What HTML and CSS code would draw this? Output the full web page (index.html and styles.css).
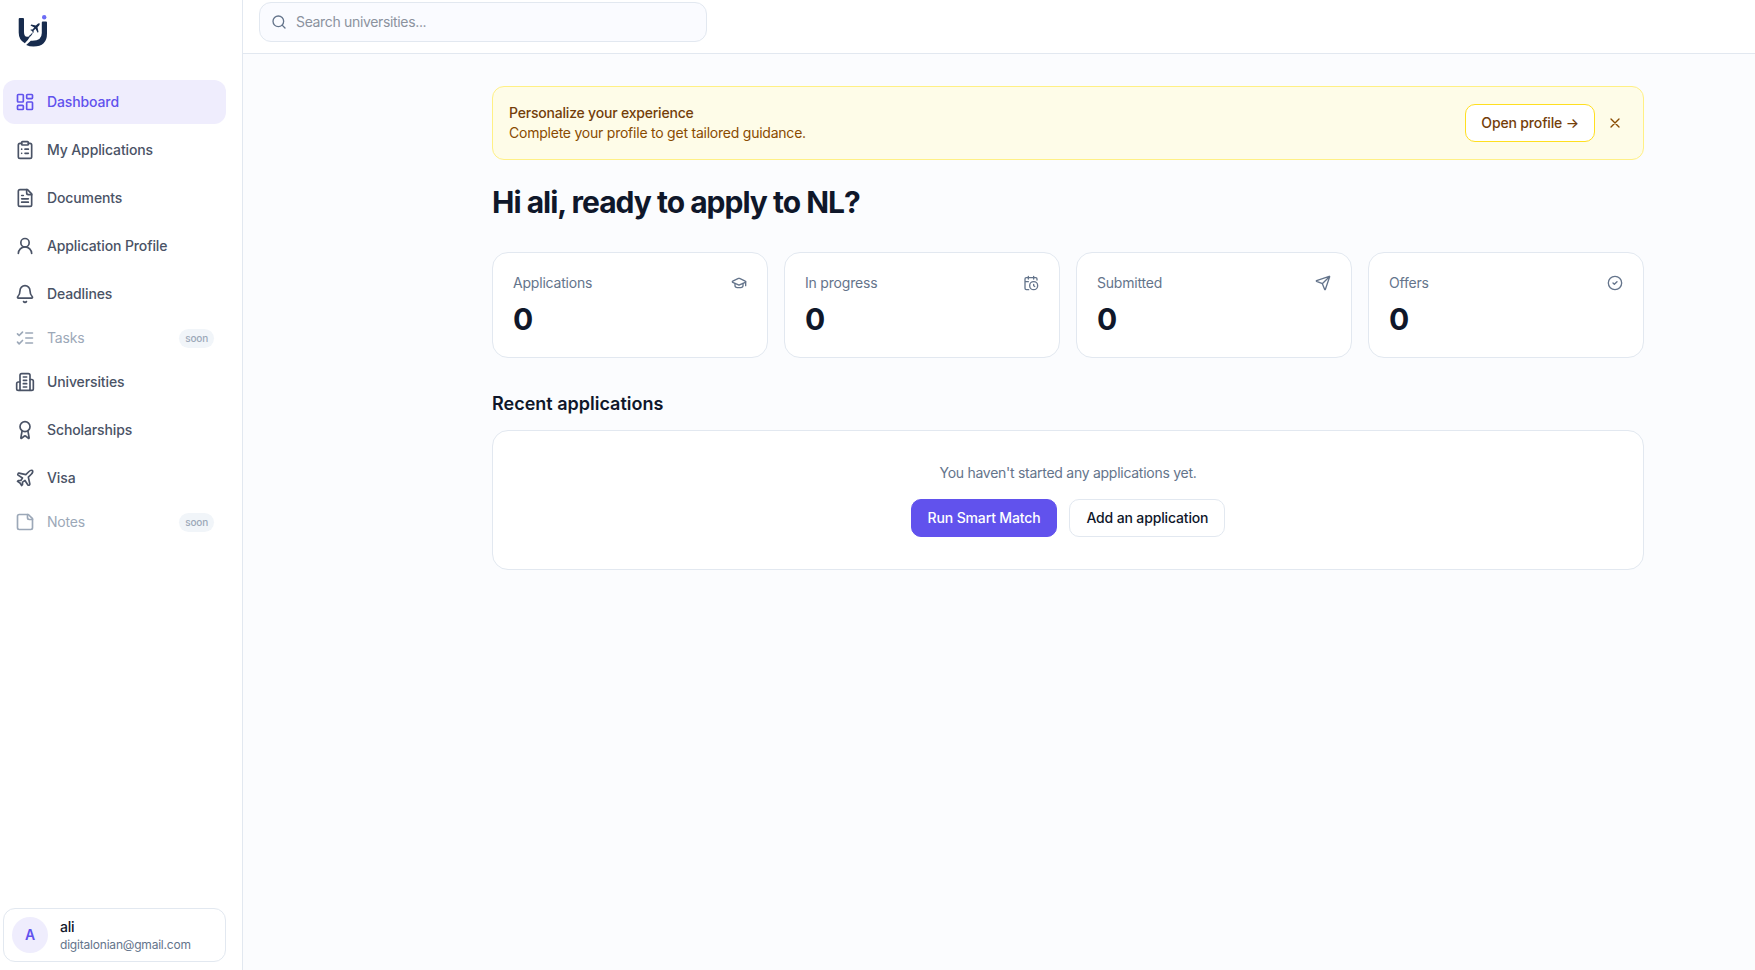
FILE: index.html
```
<!DOCTYPE html>
<html lang="en">
<head>
    <meta charset="UTF-8">
    <meta name="viewport" content="width=device-width, initial-scale=1.0">
    <title>Dashboard</title>
    <link rel="stylesheet" href="styles.css">
</head>
<body>
    <aside class="sidebar">
        <a class="logo" href="#">
            <svg width="32" height="34" viewBox="0 0 32 34">
                <g fill="#172b4d">
                    <path d="M1.700 5Q1.700 4 2.700 4H6Q7 4 7 5V18Q7 22.500 10 22.800L13 22.500Q11 26.500 7.800 29.200Q1.700 26 1.700 18.500z"/>
                    <path d="M24.800 8.500Q24.800 7.500 25.800 7.500H29Q30 7.500 30 8.500V19.500Q30 32.500 16.500 32.500Q12.500 32.500 9.200 31L13.800 26.800Q24.800 27.500 24.800 19z"/>
                    <path d="M22.600 9.300q-1.200-.3-2.100.7l-1.600 1.600-4.600-1-.8.8 3.800 2.200-1.800 2-1.500-.2-.7.700 1.800.9.900 1.900.7-.7-.2-1.500 2-1.900 2.200 3.900.8-.8-1-4.700 1.600-1.600q.9-1 .5-2.300z"/>
                    <path d="M15.300 18.500q1 1.200-2.500 4.500l-1.200-.8q3-1.800 3.700-3.700z"/>
                </g>
                <circle cx="27.200" cy="3.300" r="2.200" fill="#6c6cf5"/>
            </svg>
        </a>

        <nav class="nav">
            <a class="nav-item active" href="#">
                <svg class="icon" viewBox="0 0 24 24"><rect x="3" y="3" width="7" height="9" rx="1"/><rect x="14" y="3" width="7" height="5" rx="1"/><rect x="14" y="12" width="7" height="9" rx="1"/><rect x="3" y="16" width="7" height="5" rx="1"/></svg>
                <span>Dashboard</span>
            </a>
            <a class="nav-item" href="#">
                <svg class="icon" viewBox="0 0 24 24"><rect x="8" y="2" width="8" height="4" rx="1"/><path d="M16 4h2a2 2 0 0 1 2 2v14a2 2 0 0 1-2 2H6a2 2 0 0 1-2-2V6a2 2 0 0 1 2-2h2M12 11h4M12 16h4M8 11h.01M8 16h.01"/></svg>
                <span>My Applications</span>
            </a>
            <a class="nav-item" href="#">
                <svg class="icon" viewBox="0 0 24 24"><path d="M15 2H6a2 2 0 0 0-2 2v16a2 2 0 0 0 2 2h12a2 2 0 0 0 2-2V7Z"/><path d="M14 2v4a2 2 0 0 0 2 2h4M10 9H8M16 13H8M16 17H8"/></svg>
                <span>Documents</span>
            </a>
            <a class="nav-item" href="#">
                <svg class="icon" viewBox="0 0 24 24"><circle cx="12" cy="8" r="5"/><path d="M20 21a8 8 0 0 0-16 0"/></svg>
                <span>Application Profile</span>
            </a>
            <a class="nav-item" href="#">
                <svg class="icon" viewBox="0 0 24 24"><path d="M10.268 21a2 2 0 0 0 3.464 0"/><path d="M3.262 15.326A1 1 0 0 0 4 17h16a1 1 0 0 0 .74-1.673C19.410 13.956 18 12.499 18 8A6 6 0 0 0 6 8c0 4.499-1.411 5.956-2.738 7.326"/></svg>
                <span>Deadlines</span>
            </a>
            <div class="nav-item disabled">
                <svg class="icon" viewBox="0 0 24 24"><path d="m3 17 2 2 4-4M3 7l2 2 4-4M13 6h8M13 12h8M13 18h8"/></svg>
                <span>Tasks</span>
                <span class="badge">soon</span>
            </div>
            <a class="nav-item" href="#">
                <svg class="icon" viewBox="0 0 24 24"><path d="M6 22V4a2 2 0 0 1 2-2h8a2 2 0 0 1 2 2v18Z"/><path d="M6 12H4a2 2 0 0 0-2 2v6a2 2 0 0 0 2 2h2M18 9h2a2 2 0 0 1 2 2v9a2 2 0 0 1-2 2h-2M10 6h4M10 10h4M10 14h4M10 18h4"/></svg>
                <span>Universities</span>
            </a>
            <a class="nav-item" href="#">
                <svg class="icon" viewBox="0 0 24 24"><path d="m15.477 12.890 1.515 8.526a.5.5 0 0 1-.81.47l-3.580-2.687a1 1 0 0 0-1.197 0l-3.586 2.686a.5.5 0 0 1-.81-.469l1.514-8.526"/><circle cx="12" cy="8" r="6"/></svg>
                <span>Scholarships</span>
            </a>
            <a class="nav-item" href="#">
                <svg class="icon" viewBox="0 0 24 24"><path d="M17.800 19.200 16 11l3.500-3.500C21 6 21.500 4 21 3c-1-.5-3 0-4.500 1.500L13 8 4.800 6.200c-.5-.1-.9.1-1.100.5l-.3.500c-.2.500-.1 1 .3 1.300L9 12l-2 3H4l-1 1 3 2 2 3 1-1v-3l3-2 3.500 5.300c.3.400.8.500 1.300.3l.5-.2c.4-.3.6-.7.5-1.200z"/></svg>
                <span>Visa</span>
            </a>
            <div class="nav-item disabled">
                <svg class="icon" viewBox="0 0 24 24"><path d="M16 3H5a2 2 0 0 0-2 2v14a2 2 0 0 0 2 2h14a2 2 0 0 0 2-2V8Z"/><path d="M15 3v4a2 2 0 0 0 2 2h4"/></svg>
                <span>Notes</span>
                <span class="badge">soon</span>
            </div>
        </nav>

        <div class="user-card">
            <div class="avatar">A</div>
            <div class="user-info">
                <div class="user-name">ali</div>
                <div class="user-email">digitalonian@gmail.com</div>
            </div>
        </div>
    </aside>

    <div class="page">
        <header class="topbar">
            <div class="search">
                <svg class="icon icon-sm" viewBox="0 0 24 24"><circle cx="11" cy="11" r="8"/><path d="m21 21-4.340-4.340"/></svg>
                <span>Search universities...</span>
            </div>
        </header>

        <main class="content">
            <section class="banner">
                <div class="banner-text">
                    <div class="banner-title">Personalize your experience</div>
                    <div class="banner-desc">Complete your profile to get tailored guidance.</div>
                </div>
                <button class="btn btn-yellow">Open profile →</button>
                <button class="close" aria-label="Dismiss">
                    <svg class="icon icon-sm" viewBox="0 0 24 24"><path d="M18 6 6 18M6 6l12 12"/></svg>
                </button>
            </section>

            <h1>Hi ali, ready to apply to NL?</h1>

            <section class="stats">
                <div class="stat">
                    <div class="stat-head">
                        <span>Applications</span>
                        <svg class="icon icon-sm" viewBox="0 0 24 24"><path d="M21.420 10.922a1 1 0 0 0-.019-1.838L12.830 5.180a2 2 0 0 0-1.660 0L2.600 9.080a1 1 0 0 0 0 1.832l8.570 3.908a2 2 0 0 0 1.660 0z"/><path d="M22 10v6M6 12.500V16a6 3 0 0 0 12 0v-3.500"/></svg>
                    </div>
                    <div class="stat-value">0</div>
                </div>
                <div class="stat">
                    <div class="stat-head">
                        <span>In progress</span>
                        <svg class="icon icon-sm" viewBox="0 0 24 24"><path d="M16 14v2.200l1.600 1M16 2v4M21 7.500V6a2 2 0 0 0-2-2H5a2 2 0 0 0-2 2v14a2 2 0 0 0 2 2h3.500M3 10h5M8 2v4"/><circle cx="16" cy="16" r="6"/></svg>
                    </div>
                    <div class="stat-value">0</div>
                </div>
                <div class="stat">
                    <div class="stat-head">
                        <span>Submitted</span>
                        <svg class="icon icon-sm" viewBox="0 0 24 24"><path d="M14.536 21.686a.5.5 0 0 0 .937-.024l6.500-19a.496.496 0 0 0-.635-.635l-19 6.500a.5.5 0 0 0-.024.937l7.930 3.180a2 2 0 0 1 1.112 1.110zM21.854 2.147l-10.940 10.939"/></svg>
                    </div>
                    <div class="stat-value">0</div>
                </div>
                <div class="stat">
                    <div class="stat-head">
                        <span>Offers</span>
                        <svg class="icon icon-sm" viewBox="0 0 24 24"><circle cx="12" cy="12" r="10"/><path d="m9 12 2 2 4-4"/></svg>
                    </div>
                    <div class="stat-value">0</div>
                </div>
            </section>

            <h2>Recent applications</h2>

            <section class="empty">
                <p>You haven't started any applications yet.</p>
                <div class="actions">
                    <button class="btn btn-primary">Run Smart Match</button>
                    <button class="btn">Add an application</button>
                </div>
            </section>
        </main>
    </div>
</body>
</html>
```

FILE: styles.css
```
* {
    box-sizing: border-box;
}
body {
    margin: 0;
    display: flex;
    height: 100vh;
    font-family: Inter, "Liberation Sans", sans-serif;
    font-size: 14px;
    line-height: 20px;
    letter-spacing: -0.2px;
    color: #0f172a;
    background: #fbfcfe;
}
a {
    color: inherit;
    text-decoration: none;
}
button {
    font: inherit;
    color: inherit;
    letter-spacing: inherit;
    cursor: pointer;
}
.icon {
    width: 20px;
    height: 20px;
    flex-shrink: 0;
    fill: none;
    stroke: currentColor;
    stroke-width: 2;
    stroke-linecap: round;
    stroke-linejoin: round;
}
.icon-sm {
    width: 16px;
    height: 16px;
}

/* Sidebar */
.sidebar {
    display: flex;
    flex-direction: column;
    width: 243px;
    flex-shrink: 0;
    padding: 14px 16px 8px 3px;
    background: #fff;
    border-right: 1px solid #e2e8f0;
}
.logo {
    height: 66px;
    padding-left: 14px;
}
.nav {
    display: flex;
    flex-direction: column;
    gap: 4px;
    flex: 1;
}
.nav-item {
    display: flex;
    align-items: center;
    gap: 12px;
    height: 44px;
    padding: 0 12px;
    border-radius: 12px;
    font-weight: 450;
    letter-spacing: -0.12px;
    color: #4a5366;
}
.nav-item.active {
    background: #efedfd;
    color: #6152ed;
}
.nav-item.disabled {
    height: 36px;
    font-weight: 400;
    letter-spacing: -0.2px;
    color: #9ca8b8;
}
.badge {
    margin-left: auto;
    padding: 0 6px;
    border-radius: 10px;
    background: #f1f5f9;
    font-size: 10px;
    font-weight: 500;
    line-height: 19px;
}
.user-card {
    display: flex;
    align-items: center;
    gap: 12px;
    height: 54px;
    padding: 0 8px;
    border: 1px solid #e2e8f0;
    border-radius: 12px;
}
.avatar {
    width: 36px;
    height: 36px;
    border-radius: 50%;
    background: #efedfd;
    color: #6152ed;
    font-weight: 600;
    line-height: 36px;
    text-align: center;
}
.user-name {
    font-weight: 500;
    line-height: 18px;
}
.user-email {
    font-size: 12px;
    line-height: 17px;
    color: #64748b;
}

/* Top bar */
.page {
    flex: 1;
}
.topbar {
    height: 54px;
    padding: 2px 16px 0;
    background: #fff;
    border-bottom: 1px solid #e2e8f0;
}
.search {
    display: flex;
    align-items: center;
    gap: 9px;
    width: 448px;
    height: 40px;
    padding: 0 11px;
    border: 1px solid #e2e8f0;
    border-radius: 12px;
    background: #fafbff;
    letter-spacing: -0.34px;
    color: #8b929e;
}
.search .icon {
    color: #64748b;
}

/* Content */
.content {
    width: 1152px;
    margin: 32px 0 0 249px;
}
.banner {
    display: flex;
    align-items: center;
    height: 74px;
    padding: 0 16px;
    border: 1px solid #fff085;
    border-radius: 12px;
    background: #fefce8;
    color: #733e0a;
}
.banner-text {
    flex: 1;
}
.banner-title {
    font-weight: 500;
}
.banner-desc {
    letter-spacing: -0.23px;
    color: #894b00;
}
.btn {
    height: 38px;
    padding: 0 16px;
    border: 1px solid #e2e8f0;
    border-radius: 10px;
    background: #fff;
    font-weight: 500;
    letter-spacing: -0.15px;
}
.btn-yellow {
    padding: 0 15px;
    border-color: #ffdf20;
}
.btn-primary {
    border-color: #6152ed;
    background: #6152ed;
    color: #fff;
    font-weight: 550;
}
.close {
    display: flex;
    margin-left: 8px;
    padding: 4px;
    border: 0;
    background: none;
    color: #894b00;
}
h1 {
    margin: 24px 0 32px;
    font-size: 30px;
    line-height: 36px;
    font-weight: 700;
    letter-spacing: -1px;
}
.stats {
    display: grid;
    grid-template-columns: repeat(4, 1fr);
    gap: 16px;
}
.stat {
    height: 106px;
    padding: 20px;
    border: 1px solid #e2e8f0;
    border-radius: 16px;
    background: #fff;
}
.stat-head {
    display: flex;
    align-items: center;
    justify-content: space-between;
    color: #64748b;
}
.stat-value {
    margin-top: 8px;
    font-size: 30px;
    line-height: 36px;
    font-weight: 700;
}
h2 {
    margin: 32px 0 12px;
    font-size: 18px;
    line-height: 28px;
    font-weight: 600;
    letter-spacing: 0;
}
.empty {
    height: 140px;
    padding-top: 32px;
    border: 1px solid #e2e8f0;
    border-radius: 16px;
    background: #fff;
    text-align: center;
}
.empty p {
    margin: 0 0 16px;
    letter-spacing: -0.27px;
    color: #64748b;
}
.actions {
    display: flex;
    justify-content: center;
    gap: 12px;
}
```
